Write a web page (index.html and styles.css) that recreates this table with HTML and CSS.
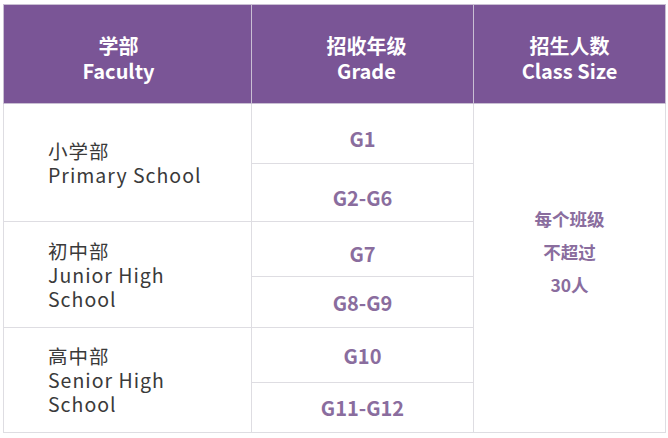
FILE: index.html
```html
<!DOCTYPE html>
<html lang="zh">
<head>
<meta charset="utf-8">
<link rel="stylesheet" href="styles.css">
</head>
<body>
<table class="tbl">
  <colgroup>
    <col class="c1"><col class="c2"><col class="c3">
  </colgroup>
  <thead>
    <tr class="head">
      <th class="h1">学部<br>Faculty</th>
      <th class="h2">招收年级<br>Grade</th>
      <th class="h3">招生人数<br>Class Size</th>
    </tr>
  </thead>
  <tbody>
    <tr class="r1">
      <td class="fac" rowspan="2">小学部<br>Primary School</td>
      <td class="grade low">G1</td>
      <td class="size" rowspan="6"><div class="size-in">每个班级<br>不超过<br>30人</div></td>
    </tr>
    <tr class="r2"><td class="grade low">G2-G6</td></tr>
    <tr class="r3">
      <td class="fac" rowspan="2">初中部<br>Junior High<br>School</td>
      <td class="grade low">G7</td>
    </tr>
    <tr class="r4"><td class="grade">G8-G9</td></tr>
    <tr class="r5">
      <td class="fac" rowspan="2">高中部<br>Senior High<br>School</td>
      <td class="grade">G10</td>
    </tr>
    <tr class="r6"><td class="grade">G11-G12</td></tr>
  </tbody>
</table>
</body>
</html>
```

FILE: styles.css
```css
html, body {
  margin: 0;
  padding: 0;
  background: #ffffff;
}
body {
  padding: 4px 0 0 3px;
  font-family: "Noto Sans CJK SC", "Noto Sans", sans-serif;
}
.tbl {
  border-collapse: collapse;
  table-layout: fixed;
  width: 662px;
}
.c1 { width: 248px; }
.c2 { width: 222px; }
.c3 { width: 192px; }
.tbl th, .tbl td {
  border: 1.5px solid #dedde2;
  padding: 0;
}
.head { height: 99px; }
.tbl .head th {
  background: #7a5596;
  color: #ffffff;
  font-size: 20px;
  font-weight: 700;
  line-height: 25px;
  text-align: center;
  vertical-align: middle;
  padding-top: 8px;
  border-color: #c9bfd3;
}
.tbl .head .h1 { padding-right: 18px; }
.tbl .head .h2 { padding-left: 8px; }
.r1 { height: 60px; }
.r2 { height: 58px; }
.r3 { height: 55px; }
.r4 { height: 51px; }
.r5 { height: 55px; }
.r6 { height: 50px; }
.tbl .fac {
  font-size: 19.5px;
  line-height: 24px;
  color: #3a3a3a;
  letter-spacing: 1px;
  padding-left: 44px;
  vertical-align: middle;
  text-align: left;
}
.tbl .grade {
  font-size: 20px;
  font-weight: 700;
  color: #8a6d9e;
  text-align: center;
  vertical-align: middle;
}
.tbl .grade.low { padding-top: 9px; }
.tbl .size {
  text-align: center;
  vertical-align: middle;
  color: #8a6d9e;
  font-weight: 700;
  font-size: 17.5px;
}
.size-in {
  line-height: 33px;
  padding-bottom: 34px;
}
```
